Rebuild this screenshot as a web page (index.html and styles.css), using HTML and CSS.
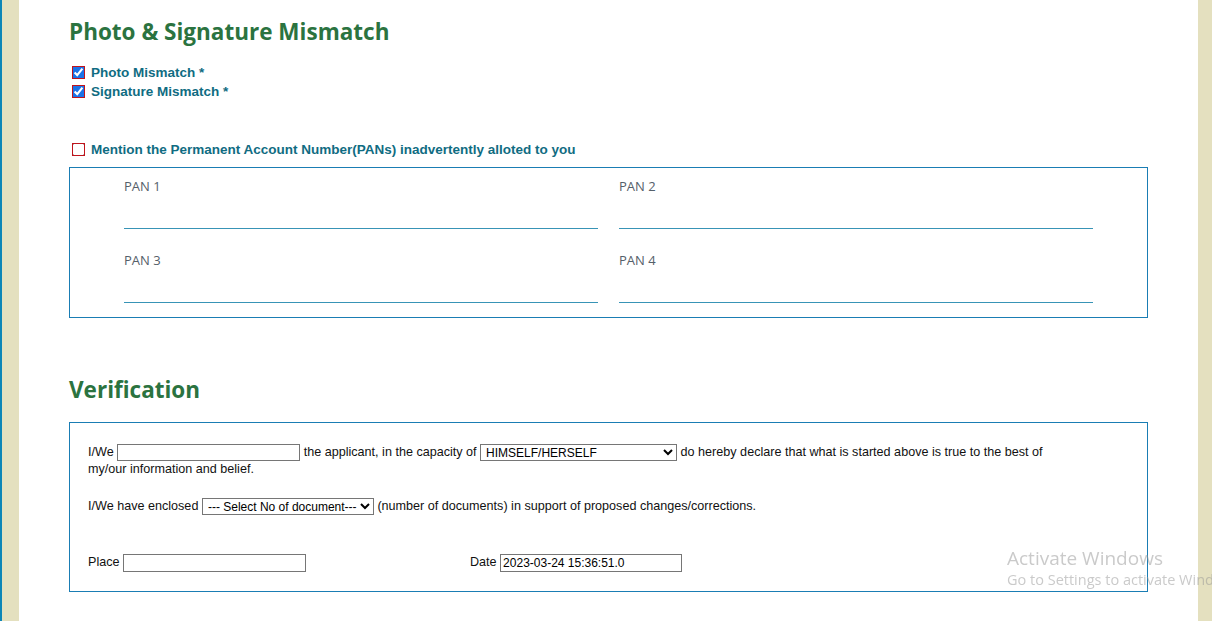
FILE: index.html
```html
<!DOCTYPE html>
<html lang="en">
<head>
<meta charset="utf-8">
<title>Photo &amp; Signature Mismatch</title>
<link rel="stylesheet" href="styles.css">
</head>
<body>
<div class="page">
  <div class="side side-left"></div>
  <main class="main">
    <h2 class="section-title">Photo &amp; Signature Mismatch</h2>
    <div class="checks">
      <label class="check-row"><input type="checkbox" class="chk" checked> <span>Photo Mismatch *</span></label>
      <label class="check-row"><input type="checkbox" class="chk" checked> <span>Signature Mismatch *</span></label>
    </div>
    <label class="check-row pan-check"><input type="checkbox" class="chk"> <span>Mention the Permanent Account Number(PANs) inadvertently alloted to you</span></label>
    <div class="pan-box">
      <div class="pan-field"><span class="pan-label">PAN 1</span><input type="text" class="pan-input"></div>
      <div class="pan-field"><span class="pan-label">PAN 2</span><input type="text" class="pan-input"></div>
      <div class="pan-field"><span class="pan-label">PAN 3</span><input type="text" class="pan-input"></div>
      <div class="pan-field"><span class="pan-label">PAN 4</span><input type="text" class="pan-input"></div>
    </div>

    <h2 class="section-title verif-title">Verification</h2>
    <div class="verif-box">
      <p class="verif-line first">I/We <input type="text" class="txt w-name"> the applicant, in the capacity of <select class="sel w-cap"><option>HIMSELF/HERSELF</option></select> do hereby declare that what is started above is true to the best of my/our information and belief.</p>
      <p class="verif-line second">I/We have enclosed <select class="sel w-doc"><option>--- Select No of document---</option></select> (number of documents) in support of proposed changes/corrections.</p>
      <div class="place-row">
        <div class="place-cell">Place <input type="text" class="txt w-place"></div>
        <div class="date-cell">Date <input type="text" class="txt w-date" value="2023-03-24 15:36:51.0"></div>
      </div>
    </div>
  </main>
  <div class="side side-right"></div>
</div>
<div class="watermark">
  <div class="wm-title">Activate Windows</div>
  <div class="wm-sub">Go to Settings to activate Windows.</div>
</div>
</body>
</html>
```
FILE: styles.css
```css
html, body {
  margin: 0;
  padding: 0;
  height: 100%;
  overflow: hidden;
  background: #ffffff;
}
.page {
  display: flex;
  min-height: 621px;
  width: 1212px;
}
.side {
  background: #e4e0bf;
}
.side-left {
  width: 17px;
  border-left: 2px solid #0d86b7;
  flex: 0 0 auto;
}
.side-right {
  width: 14px;
  flex: 0 0 auto;
}
.main {
  flex: 1 1 auto;
  background: #ffffff;
  padding: 16px 50px 0 50px;
}
.section-title {
  margin: 0;
  font-family: "Open Sans", sans-serif;
  font-weight: 700;
  font-size: 22.5px;
  line-height: 32px;
  color: #2b7340;
}
.checks {
  margin-top: 15px;
}
.check-row {
  display: flex;
  align-items: center;
  height: 19px;
  font-family: "Liberation Sans", Arial, sans-serif;
  font-weight: 700;
  font-size: 13.5px;
  color: #106c82;
}
.check-row span {
  margin-left: 3px;
}
.chk {
  width: 13px;
  height: 13px;
  margin: 0 3px 0 3px;
  outline: 1px solid #c0141c;
  outline-offset: -1px;
  accent-color: #1a73e8;
}
.pan-check {
  margin-top: 39px;
}
.pan-box {
  margin-top: 8px;
  border: 1px solid #1a7db4;
  padding: 9px 53px 14px 54px;
  display: grid;
  grid-template-columns: 474px 474px;
  column-gap: 21px;
  row-gap: 22px;
}
.pan-field {
  display: flex;
  flex-direction: column;
}
.pan-label {
  font-family: "Open Sans", sans-serif;
  font-size: 13px;
  line-height: 18px;
  color: #55606a;
}
.pan-input {
  height: 34px;
  box-sizing: border-box;
  border: none;
  border-bottom: 1px solid #3894b6;
  padding: 0;
  margin: 0;
  outline: none;
  background: transparent;
}
.verif-title {
  margin-top: 56px;
}
.verif-box {
  margin-top: 16px;
  border: 1px solid #1a7db4;
  padding: 21px 18px 19px 18px;
  font-family: "Liberation Sans", Arial, sans-serif;
  font-size: 12.6px;
  color: #111;
}
.verif-line {
  margin: 0;
  line-height: 16px;
  max-width: 960px;
}
.verif-line.second {
  margin-top: 21px;
}
.txt, .sel {
  box-sizing: border-box;
  height: 17px;
  font-family: "Liberation Sans", Arial, sans-serif;
  font-size: 12px;
  color: #000;
  border: 1px solid #767676;
  border-radius: 0;
  padding: 0 2px;
  margin: 0;
  vertical-align: middle;
  background: #fff;
}
.sel {
  padding: 0 0 0 1px;
}
.w-name { width: 183px; }
.w-cap { width: 197px; }
.w-doc { width: 172px; }
.w-place { width: 183px; height: 18px; }
.w-date { width: 182px; height: 18px; }
.place-row {
  margin-top: 38px;
  display: grid;
  grid-template-columns: 382px auto;
  line-height: 18px;
}
.watermark {
  position: fixed;
  left: 1007px;
  top: 546px;
  font-family: "Open Sans", sans-serif;
  color: rgba(150, 150, 150, 0.5);
  white-space: nowrap;
  pointer-events: none;
}
.wm-title {
  font-size: 19px;
  line-height: 24px;
}
.wm-sub {
  font-size: 14.5px;
  line-height: 20px;
}
```
